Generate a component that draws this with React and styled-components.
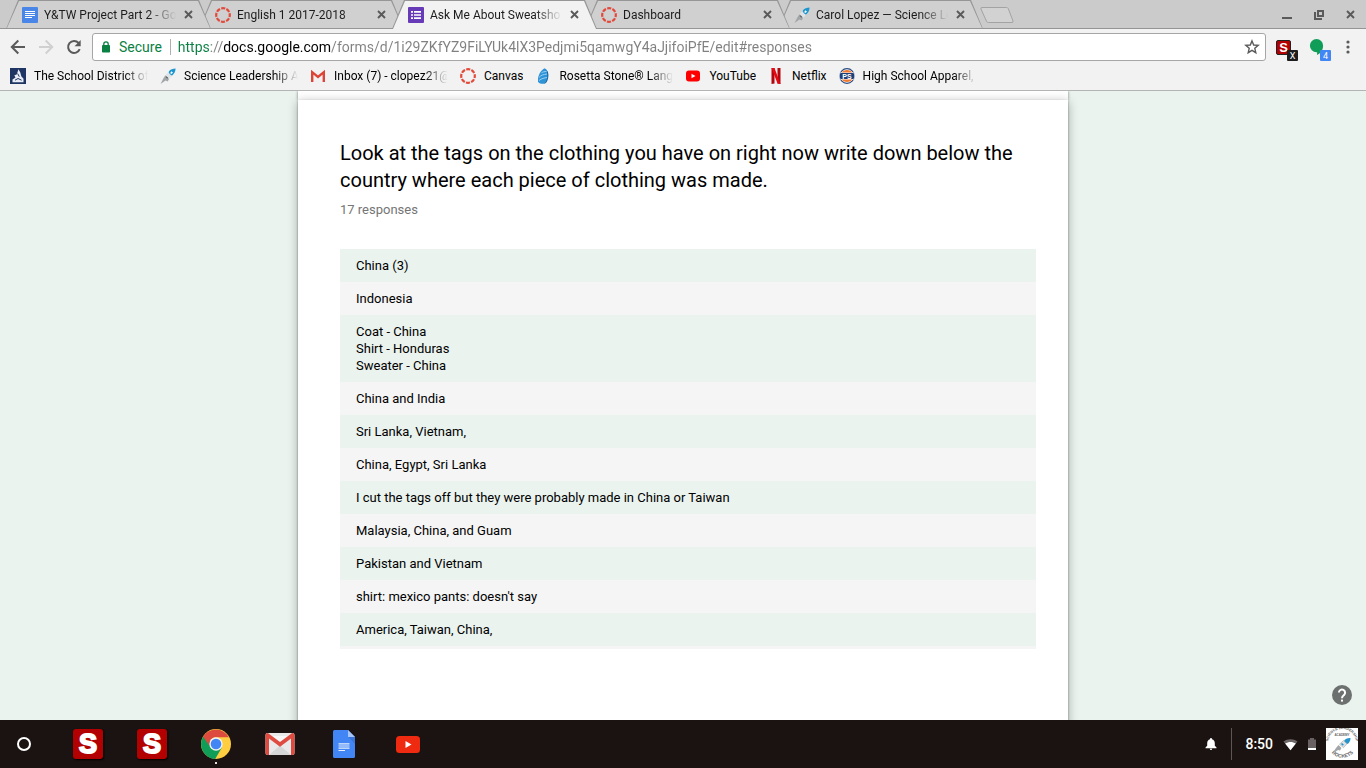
import React from "react";
import styled, { createGlobalStyle } from "styled-components";

const answers = [
  ["China (3)"],
  ["Indonesia"],
  ["Coat - China", "Shirt - Honduras", "Sweater - China"],
  ["China and India"],
  ["Sri Lanka, Vietnam,"],
  ["China, Egypt, Sri Lanka"],
  ["I cut the tags off but they were probably made in China or Taiwan"],
  ["Malaysia, China, and Guam"],
  ["Pakistan and Vietnam"],
  ["shirt: mexico pants: doesn't say"],
  ["America, Taiwan, China,"],
];

/* ---------- icons ---------- */

const DocsFavicon = () => (
  <svg width="16" height="16" viewBox="0 0 16 16">
    <rect width="16" height="16" rx="1" fill="#4a86e8" />
    <path d="M3 4.5h10M3 6.5h10M3 8.5h10M3 10.5h7" stroke="#fff" strokeWidth="1" />
  </svg>
);

const CanvasIcon = () => (
  <svg width="16" height="16" viewBox="0 0 16 16">
    <circle
      cx="8"
      cy="8"
      r="6.8"
      fill="none"
      stroke="#e2493b"
      strokeWidth="2.2"
      strokeDasharray="4.1 1.24"
      strokeDashoffset="2.05"
    />
  </svg>
);

const FormsIcon = () => (
  <svg width="16" height="16" viewBox="0 0 16 16">
    <rect width="16" height="16" rx="1" fill="#673ab7" />
    <path d="M3 4.8h2M3 8h2M3 11.2h2M6 4.8h7M6 8h7M6 11.2h7" stroke="#fff" strokeWidth="1.7" />
  </svg>
);

const RocketIcon = () => (
  <svg width="16" height="16" viewBox="0 0 16 16">
    <path d="M15.6.6c-2.8 0-5.2 1-6.6 2.6L8.5 5.5l2 2.3 2-.5c1.8-1.7 3-3.9 3.1-6.7z" fill="#1c96cf" />
    <path d="M8.2 4.2l3.6 3.8-2.3 2.8-4-3.8z" fill="#dfe3e6" />
    <path d="M11.5 3.2l1.5 1.5-1.8 1.3-1-1z" fill="#fff" />
    <path d="M5.4 7.2l3.7 3.7-1.5 2.5-2-1L.5 16l2.8-5.5z" fill="#a3a6a9" />
    <path d="M6 8.6l1.8 1.7" stroke="#5f6468" strokeWidth="1.2" />
  </svg>
);

const SchoolIcon = () => (
  <svg width="16" height="16" viewBox="0 0 16 16">
    <rect width="16" height="16" fill="#1f3563" />
    <path d="M8.5 1.2l1.8 3.4 1 3.6 2.2 2.6v3.4H2.5v-2.6l3-2.2-1.2-2.2 2.4-.8z" fill="#e8ecf4" />
    <path d="M5 12.2l3-1.7 3.6 1.7M7.6 5.5l1.7 3.2" stroke="#1f3563" fill="none" />
  </svg>
);

const GmailSmall = () => (
  <svg width="16" height="16" viewBox="0 0 16 16">
    <path d="M2 3h12v11H2z" fill="#f1f1f1" />
    <path d="M2.200 14V4.200L8 9l5.800-4.800V14" fill="none" stroke="#dc4437" strokeWidth="2.400" />
  </svg>
);

const RosettaIcon = () => (
  <svg width="16" height="16" viewBox="0 0 16 16">
    <path d="M9.5.3c3 1.300 4 4.300 3.600 8-.3 3.500-1.500 6.500-4 7.500-2.400.3-5-.4-6-1.800C2.400 8.500 5 3 9.500.3z" fill="#2f93d6" />
    <path d="M4 9.500c2-2.500 4.500-3 8-3.500M4 12.500c3-2.200 5-2.500 8.300-3M6.500 4.800c1.500-1 3-1.200 5-1.300" stroke="#9bd3f5" fill="none" />
    <path d="M12.300 3.500c1.200 4 .5 9.500-2.500 12" stroke="#17629d" fill="none" />
  </svg>
);

const YouTubeSmall = () => (
  <svg width="16" height="16" viewBox="0 0 16 16">
    <rect x="1" y="2.5" width="14" height="11" rx="3" fill="#f00" />
    <path d="M6.500 5.700v4.600L10.500 8z" fill="#fff" />
  </svg>
);

const NetflixIcon = () => (
  <svg width="16" height="16" viewBox="0 0 16 16">
    <path d="M3.500 0h3v15.500l-3 .5zM9.500 0h3v16l-3-.5z" fill="#b1060f" />
    <path d="M3.500 0h3l6 16-3-.5z" fill="#e50914" />
  </svg>
);

const PrepIcon = () => (
  <svg width="16" height="16" viewBox="0 0 16 16">
    <circle cx="8" cy="8" r="7.3" fill="#fff" stroke="#2a4a80" strokeWidth="1.2" />
    <path d="M2.500 5.200C4 1 12 1 13.500 5.200z" fill="#f07a33" />
    <path d="M2.500 11C4 15 12 15 13.500 11z" fill="#f07a33" />
    <path d="M.5 8h15" stroke="#fff" strokeWidth="7" />
    <rect x="1" y="5" width="14" height="6" rx="1" fill="#1f3f78" />
    <text x="8" y="10.5" textAnchor="middle" fontSize="7" fontWeight="700" fontFamily="Liberation Sans, sans-serif" fill="#fff">
      PS
    </text>
  </svg>
);

const CloseIcon = () => (
  <svg width="9" height="9" viewBox="0 0 9 9">
    <path d="M1 1l7 7M8 1L1 8" stroke="#5a5a5a" strokeWidth="1.9" />
  </svg>
);

const ArrowIcon = () => (
  <svg width="16" height="16" viewBox="0 0 16 16">
    <path d="M15 8H2M8.3 1.500L1.800 8l6.500 6.500" fill="none" stroke="currentColor" strokeWidth="2" />
  </svg>
);

const ReloadIcon = () => (
  <svg width="16" height="16" viewBox="0 0 16 16">
    <path d="M13.700 10.200A6 6 0 1 1 12.600 4" fill="none" stroke="#5a5a5a" strokeWidth="2" />
    <path d="M14.700 1v6.200H8.500z" fill="#5a5a5a" />
  </svg>
);

const LockIcon = () => (
  <svg width="10" height="12" viewBox="0 0 10 12">
    <rect x="1" y="4" width="8" height="7.5" rx="0.8" fill="#0b8043" />
    <path d="M2.800 5V3a2.200 2.200 0 0 1 4.400 0v2" fill="none" stroke="#0b8043" strokeWidth="1.3" />
  </svg>
);

const StarIcon = () => (
  <svg width="16" height="16" viewBox="0 0 16 16">
    <path
      d="M8 1.900l1.700 4.100 4.500.4-3.400 2.900 1 4.400L8 11.400l-3.800 2.300 1-4.400L1.800 6.400l4.500-.4z"
      fill="none"
      stroke="#5a5a5a"
      strokeWidth="1.4"
    />
  </svg>
);

const HangoutsIcon = () => (
  <svg width="16" height="18" viewBox="0 0 16 18">
    <path d="M7.500 1a6.600 6.600 0 0 0 0 13.200h.6V17c3.500-1.800 6-5.300 6-9.300A6.600 6.600 0 0 0 7.500 1z" fill="#0f9d58" />
  </svg>
);

const MenuDots = () => (
  <svg width="4" height="14" viewBox="0 0 4 14">
    <g fill="#5a5a5a">
      <circle cx="2" cy="2" r="1.6" />
      <circle cx="2" cy="7" r="1.6" />
      <circle cx="2" cy="12" r="1.6" />
    </g>
  </svg>
);

const MinimizeIcon = () => (
  <svg width="10" height="10" viewBox="0 0 10 10">
    <path d="M0 8h10" stroke="#5a5a5a" strokeWidth="2" />
  </svg>
);

const RestoreIcon = () => (
  <svg width="10" height="10" viewBox="0 0 10 10">
    <path d="M4 1h5v5H4z" fill="none" stroke="#5a5a5a" strokeWidth="2" />
    <path d="M1 2v7h7" fill="none" stroke="#5a5a5a" strokeWidth="2" />
  </svg>
);

const NewTabShape = () => (
  <svg width="36" height="18" viewBox="0 0 36 18">
    <path d="M3 1.500h24.500q1.200 0 1.700 1l4.800 12.500q.4 1.500-1 1.500H9.500q-1.500 0-2-1.200L2 3q-.5-1.500 1-1.500z" fill="#d2d2d2" stroke="#a3a3a3" />
  </svg>
);

const ChromeIcon = () => (
  <svg width="30" height="30" viewBox="0 0 30 30">
    <circle cx="15" cy="15" r="15" fill="#ffcd40" />
    <path d="M2.100 7.400A15 15 0 0 0 14.200 30L20.900 18.400 15 15z" fill="#0f9d58" />
    <path d="M2.100 7.400A15 15 0 0 1 27.900 8.200H15a6.800 6.800 0 0 0-6.300 9.300z" fill="#dd4b3e" />
    <circle cx="15" cy="15" r="6.700" fill="#f1f1f1" />
    <circle cx="15" cy="15" r="5.300" fill="#4285f4" />
  </svg>
);

const GmailIcon = () => (
  <svg width="30" height="22" viewBox="0 0 30 22">
    <rect x="0.5" width="29" height="22" rx="2" fill="#e9e9e9" />
    <path d="M4 22l11-9.500L26 22z" fill="#d6d6d6" />
    <path d="M4 3h22L15 12z" fill="#f7f7f7" />
    <path d="M0.500 2a2 2 0 0 1 3.400-1.300L15 9 26.100.7A2 2 0 0 1 29.500 2v18a2 2 0 0 1-2 2H26V5.500L15 13.800 4 5.500V22H2.500a2 2 0 0 1-2-2z" fill="#de4c41" />
  </svg>
);

const DocsIcon = () => (
  <svg width="22" height="28" viewBox="0 0 22 28">
    <path d="M1.500 0H15l7 7v19.500q0 1.500-1.500 1.500h-19Q0 28 0 26.500v-25Q0 0 1.500 0z" fill="#4285f4" />
    <path d="M15 0l7 7h-7z" fill="#a6c5fa" />
    <path d="M22 7v7l-6.500-7z" fill="#3a75d8" />
    <path d="M5.500 13.800h11M5.500 16h11M5.500 18.200h11M5.500 20.500h6.500" stroke="#e8f0fe" strokeWidth="1.2" />
  </svg>
);

const YouTubeIcon = () => (
  <svg width="24" height="17" viewBox="0 0 24 17">
    <rect width="24" height="17" rx="3.5" fill="#ee2a10" />
    <path d="M9.500 5v7l6-3.500z" fill="#fff" />
  </svg>
);

const BellIcon = () => (
  <svg width="12" height="12" viewBox="0 0 12 12">
    <path d="M6 0a1 1 0 0 1 1 1v.3c1.800.5 2.800 2 2.800 3.900v2.600L11.500 9.500v.7H.5v-.7l1.700-1.700V5.200c0-1.900 1-3.400 2.800-3.900V1a1 1 0 0 1 1-1zM4.800 10.800h2.400a1.200 1.200 0 0 1-2.400 0z" fill="#fff" />
  </svg>
);

const WifiIcon = () => (
  <svg width="15" height="13" viewBox="0 0 16 13">
    <path d="M8 12.500L.5 3.300C5 0 11 0 15.500 3.300z" fill="#6d6767" />
    <path d="M8 12.500L2.300 5.500c3.400-2.400 8-2.400 11.400 0z" fill="#fff" />
  </svg>
);

const BatteryIcon = () => (
  <svg width="8" height="12" viewBox="0 0 8 12">
    <path d="M0 1.500h2V0h4v1.500h2V12H0z" fill="#6a6262" />
    <path d="M0 10h8v2H0z" fill="#fff" />
  </svg>
);

const HelpIcon = () => (
  <svg width="20" height="20" viewBox="0 0 20 20">
    <circle cx="10" cy="10" r="10" fill="#6c706e" />
    <path d="M6.900 7.600a3.100 3.100 0 1 1 5 2.500c-1 .8-1.900 1.400-1.900 3.100" fill="none" stroke="#fff" strokeWidth="2" />
    <rect x="9" y="14.6" width="2" height="2" fill="#fff" />
  </svg>
);

const AvatarPicture = () => (
  <svg width="32" height="32" viewBox="0 0 32 32">
    <defs>
      <path id="arc-top" d="M2 15a14 14 0 0 1 28 0" />
      <path id="arc-bottom" d="M5 24a14.500 14.500 0 0 0 23 0" />
    </defs>
    <rect width="32" height="32" fill="#fff" />
    <g fontFamily="Liberation Sans, sans-serif" fontWeight="700" fill="#666">
      <text fontSize="3.6" textAnchor="middle">
        <textPath href="#arc-top" startOffset="50%">SCIENCE LEADERSHIP</textPath>
      </text>
      <text x="16" y="8" fontSize="3" textAnchor="middle">ACADEMY</text>
      <text fontSize="5" textAnchor="middle">
        <textPath href="#arc-bottom" startOffset="50%">ROCKETS</textPath>
      </text>
    </g>
    <path d="M24.500 10c-2.500-.2-4.500.5-6 2l-.5 2 2 2 2-.3c1.500-1.500 2.500-3.300 2.500-5.700z" fill="#2394cc" />
    <path d="M17.500 12.500l3.500 3.200-3.500 4-4-3.500z" fill="#dfe3e6" stroke="#999" strokeWidth="0.5" />
    <path d="M15.500 15.500l1.800 1.800" stroke="#2394cc" strokeWidth="1.6" />
    <path d="M12.500 17l3 3-1.500 2.500-2-.5-6 4 4-6z" fill="#a3a6a9" />
  </svg>
);

/* ---------- browser ---------- */

const Tab = ({ icon, title, active }) => (
  <TabBox $active={active}>
    {icon}
    <TabTitle>{title}</TabTitle>
    <IconButton aria-label="Close tab">
      <CloseIcon />
    </IconButton>
  </TabBox>
);

const Bookmark = ({ icon, children, fade }) => (
  <BookmarkLink href="#" $fade={fade}>
    {icon}
    <span>{children}</span>
  </BookmarkLink>
);

const Browser = () => (
  <header>
    <TabStrip>
      <Tab icon={<DocsFavicon />} title="Y&TW Project Part 2 - Go" />
      <Tab icon={<CanvasIcon />} title="English 1 2017-2018" />
      <Tab icon={<FormsIcon />} title="Ask Me About Sweatsho" active />
      <Tab icon={<CanvasIcon />} title="Dashboard" />
      <Tab icon={<RocketIcon />} title="Carol Lopez — Science Le" />
      <NewTab aria-label="New tab">
        <NewTabShape />
      </NewTab>
      <WindowControls>
        <IconButton aria-label="Minimize">
          <MinimizeIcon />
        </IconButton>
        <IconButton aria-label="Restore">
          <RestoreIcon />
        </IconButton>
        <IconButton aria-label="Close">
          <CloseIcon />
        </IconButton>
      </WindowControls>
    </TabStrip>
    <Toolbar>
      <NavButtons>
        <IconButton aria-label="Back">
          <ArrowIcon />
        </IconButton>
        <ForwardButton aria-label="Forward" disabled>
          <ArrowIcon />
        </ForwardButton>
        <IconButton aria-label="Reload">
          <ReloadIcon />
        </IconButton>
      </NavButtons>
      <Omnibox>
        <LockIcon />
        <Secure>Secure</Secure>
        <UrlInput
          aria-label="Address"
          spellCheck={false}
          defaultValue="https://docs.google.com/forms/d/1i29ZKfYZ9FiLYUk4lX3Pedjmi5qamwgY4aJjifoiPfE/edit#responses"
        />
        <IconButton aria-label="Bookmark this page">
          <StarIcon />
        </IconButton>
      </Omnibox>
      <Extensions>
        <Extension aria-label="Extension S">
          <SBadge>S</SBadge>
          <Count>X</Count>
        </Extension>
        <Extension aria-label="Hangouts">
          <HangoutsIcon />
          <Count $color="#4285f4">4</Count>
        </Extension>
        <MenuButton aria-label="Menu">
          <MenuDots />
        </MenuButton>
      </Extensions>
    </Toolbar>
    <Bookmarks>
      <Bookmark icon={<SchoolIcon />} fade>The School District of</Bookmark>
      <Bookmark icon={<RocketIcon />} fade>Science Leadership A</Bookmark>
      <Bookmark icon={<GmailSmall />} fade>Inbox (7) - clopez21@</Bookmark>
      <Bookmark icon={<CanvasIcon />}>Canvas</Bookmark>
      <Bookmark icon={<RosettaIcon />} fade>Rosetta Stone® Lang</Bookmark>
      <Bookmark icon={<YouTubeSmall />}>YouTube</Bookmark>
      <Bookmark icon={<NetflixIcon />}>Netflix</Bookmark>
      <Bookmark icon={<PrepIcon />} fade>High School Apparel,</Bookmark>
    </Bookmarks>
  </header>
);

const Responses = () => (
  <Page>
    <PreviousCard />
    <Card>
      <Question>
        Look at the tags on the clothing you have on right now write down below the country where each piece of clothing was
        made.
      </Question>
      <Total>17 responses</Total>
      <AnswerList>
        {answers.map((lines) => (
          <Answer key={lines[0]}>
            {lines.map((line) => (
              <div key={line}>{line}</div>
            ))}
          </Answer>
        ))}
      </AnswerList>
    </Card>
    <Help aria-label="Help">
      <HelpIcon />
    </Help>
  </Page>
);

const Shelf = () => (
  <ShelfBar>
    <Launcher aria-label="Launcher" />
    <ShelfApp aria-label="S app">
      <STile>S</STile>
    </ShelfApp>
    <ShelfApp aria-label="S app">
      <STile>S</STile>
    </ShelfApp>
    <ShelfApp aria-label="Chrome" $running>
      <ChromeIcon />
    </ShelfApp>
    <ShelfApp aria-label="Gmail">
      <GmailIcon />
    </ShelfApp>
    <ShelfApp aria-label="Docs">
      <DocsIcon />
    </ShelfApp>
    <ShelfApp aria-label="YouTube">
      <YouTubeIcon />
    </ShelfApp>
    <Tray>
      <BellIcon />
      <Status>
        <time>8:50</time>
        <WifiIcon />
        <BatteryIcon />
        <AvatarPicture />
      </Status>
    </Tray>
  </ShelfBar>
);

const App = () => (
  <>
    <GlobalStyle />
    <Screen>
      <Browser />
      <Responses />
      <Shelf />
    </Screen>
  </>
);

export default App;

const GlobalStyle = createGlobalStyle`
  * {
    box-sizing: border-box;
  }
  body {
    margin: 0;
    font-family: Roboto, sans-serif;
    color: #000;
  }
  button {
    padding: 0;
    border: none;
    background: none;
    font-family: inherit;
  }
  svg {
    display: block;
    flex-shrink: 0;
  }
`;

const Screen = styled.div`
  display: flex;
  flex-direction: column;
  height: 100vh;
  overflow: hidden;
`;

const IconButton = styled.button`
  display: flex;
  align-items: center;
  justify-content: center;
`;

const TabStrip = styled.div`
  display: flex;
  height: 29px;
  padding: 0 11px 0 6px;
  background: #cbcbcb;
  box-shadow: inset 0 -1px #959595;
`;

const TabBox = styled.div`
  position: relative;
  z-index: ${({ $active }) => ($active ? 2 : 1)};
  display: flex;
  align-items: center;
  gap: 6px;
  flex: 0 1 205px;
  min-width: 0;
  height: 29px;
  margin-right: -12px;
  padding: 0 18px 0 16px;
  isolation: isolate;

  &:nth-child(1) {
    z-index: 2;
  }
  &:nth-child(5) {
    z-index: 0;
  }
  &::before,
  &::after {
    content: "";
    position: absolute;
    inset: 0;
    z-index: -1;
    background: #969696;
    clip-path: polygon(0 100%, 12px 0, calc(100% - 12px) 0, 100% 100%);
  }
  &::after {
    inset: 1px 1px ${({ $active }) => ($active ? 0 : 1)}px;
    background: ${({ $active }) => ($active ? "#f2f2f2" : "#d0d0d0")};
  }
`;

const TabTitle = styled.span`
  flex: 1;
  overflow: hidden;
  white-space: nowrap;
  font-size: 12px;
  line-height: 16px;
  color: #1c1c1c;
  mask-image: linear-gradient(to left, transparent, #000 28px);
  & + button {
    width: 9px;
    margin-left: 2px;
  }
`;

const NewTab = styled.button`
  margin: 6px 0 0 8px;
  height: 18px;
`;

const WindowControls = styled.div`
  display: flex;
  align-items: center;
  gap: 22px;
  margin-left: auto;
`;

const Toolbar = styled.div`
  display: flex;
  align-items: center;
  height: 36px;
  padding: 0 12px 0 10px;
  background: #f2f2f2;
`;

const NavButtons = styled.div`
  display: flex;
  gap: 12px;
  margin-right: 10px;
  color: #5a5a5a;
  button {
    color: inherit;
  }
`;

const ForwardButton = styled(IconButton)`
  && {
    color: #d0d0d0;
  }
  transform: scaleX(-1);
`;

const MenuButton = styled(IconButton)`
  width: 12px;
`;

const Omnibox = styled.div`
  display: flex;
  align-items: center;
  flex: 1;
  height: 28px;
  padding: 0 5px 0 8px;
  border: 1px solid #a6a6a6;
  border-radius: 3px;
  background: #fff;
`;

const Secure = styled.span`
  margin-left: 8px;
  padding-right: 8px;
  margin-right: 7px;
  border-right: 1px solid #b0b0b0;
  font-size: 14px;
  line-height: 16px;
  color: #0b8043;
`;

/* scheme, host and path get their own colour through the clipped gradient */
const UrlInput = styled.input`
  flex: 1;
  min-width: 0;
  padding: 0;
  border: none;
  outline: none;
  font-family: inherit;
  font-size: 14px;
  line-height: 20px;
  color: transparent;
  background: linear-gradient(
    to right,
    #0b8043 33px,
    #808080 33px,
    #808080 46px,
    #000 46px,
    #000 153px,
    #808080 153px
  );
  background-clip: text;
`;

const Extensions = styled.div`
  display: flex;
  align-items: center;
  gap: 17px;
  margin-left: 10px;
`;

const Extension = styled.button`
  position: relative;
  width: 16px;
  height: 18px;
`;

const SBadge = styled.span`
  display: block;
  width: 15px;
  height: 15px;
  border: 1px solid #222;
  border-radius: 2px;
  background: #b30000;
  font: bold 13px / 13px "Liberation Sans", sans-serif;
  text-align: center;
  color: #fff;
`;

const Count = styled.span`
  position: absolute;
  left: 11px;
  top: 12px;
  width: 11px;
  height: 11px;
  border-radius: 1px;
  background: ${({ $color }) => $color || "#1c1c1c"};
  font-size: 9px;
  line-height: 12px;
  text-align: center;
  color: #fff;
`;

const Bookmarks = styled.nav`
  display: flex;
  gap: 12px;
  height: 26px;
  padding: 0 10px;
  border-bottom: 1px solid #b4b4b4;
  background: #f2f2f2;
`;

const BookmarkLink = styled.a`
  display: flex;
  align-items: center;
  gap: 8px;
  height: 22px;
  font-size: 12px;
  line-height: 16px;
  color: #000;
  text-decoration: none;
  span {
    width: ${({ $fade }) => ($fade ? "114px" : "auto")};
    overflow: hidden;
    white-space: nowrap;
    mask-image: ${({ $fade }) => ($fade ? "linear-gradient(to left, transparent, #000 24px)" : "none")};
  }
`;

const Page = styled.main`
  position: relative;
  flex: 1;
  min-height: 0;
  overflow: hidden;
  background: #eaf3ee;
`;

const Sheet = styled.section`
  width: 770px;
  max-width: 100%;
  margin: 0 auto;
  background: #fff;
`;

const PreviousCard = styled(Sheet)`
  height: 9px;
  box-shadow: 0 0 3px rgba(0, 0, 0, 0.5);
`;

const Card = styled(Sheet)`
  position: relative;
  min-height: 100%;
  padding: 40px 32px 40px 42px;
  box-shadow: 0 1px 2px rgba(0, 0, 0, 0.4), 0 2px 10px rgba(0, 0, 0, 0.3);
`;

const Question = styled.h1`
  margin: 0;
  font-size: 20px;
  font-weight: 400;
  line-height: 27px;
`;

const Total = styled.p`
  margin: 8px 0 31px;
  font-size: 13px;
  line-height: 16px;
  color: #757575;
`;

const AnswerList = styled.ul`
  height: 400px;
  margin: 0;
  padding: 0;
  overflow: hidden;
  list-style: none;
  background: #f5f5f5;
`;

const Answer = styled.li`
  padding: 8px 16px;
  font-size: 13px;
  line-height: 17px;
  &:nth-child(odd) {
    background: #eaf3ee;
  }
`;

const Help = styled.button`
  position: absolute;
  right: 14px;
  bottom: 15px;
`;

const ShelfBar = styled.footer`
  display: flex;
  align-items: center;
  height: 48px;
  padding: 0 8px 0 16px;
  background: #1b1311;
`;

const Launcher = styled.button`
  && {
    width: 14px;
    height: 14px;
    margin: 0 25px 0 1px;
    border: 2px solid #fff;
    border-radius: 50%;
  }
`;

const ShelfApp = styled.button`
  position: relative;
  display: flex;
  align-items: center;
  justify-content: center;
  width: 64px;
  height: 48px;
  &::after {
    content: "";
    display: ${({ $running }) => ($running ? "block" : "none")};
    position: absolute;
    bottom: 4px;
    left: 31px;
    width: 2px;
    height: 2px;
    background: #ddd;
  }
`;

const STile = styled.span`
  width: 30px;
  height: 30px;
  border-radius: 3px;
  background: #b30000;
  box-shadow: 1px 1px 2px #000;
  font: bold 27px / 30px "Liberation Sans", sans-serif;
  color: #fff;
  -webkit-text-stroke: 2px #fff;
`;

const Tray = styled.div`
  display: flex;
  align-items: center;
  gap: 14px;
  margin-left: auto;
`;

const Status = styled.div`
  display: flex;
  align-items: center;
  gap: 10px;
  height: 32px;
  padding-left: 13px;
  border-left: 1px solid #5c5654;
  color: #fff;
  time {
    font-size: 14px;
    font-weight: 500;
    line-height: 16px;
  }
`;
